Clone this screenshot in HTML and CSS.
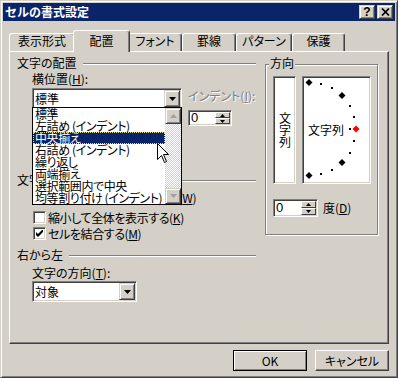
FILE: index.html
```html
<!DOCTYPE html>
<html lang="ja">
<head>
    <meta charset="UTF-8">
    <title>セルの書式設定</title>
    <link rel="stylesheet" href="styles.css">
</head>
<body>
<div class="window">
    <div class="titlebar">
        <span class="title">セルの書式設定</span>
        <div class="caption-btns">
            <span class="cap-btn help">?</span>
            <span class="cap-btn"><svg width="9" height="8" viewBox="0 0 9 8"><path d="M1 0.5l7 7M8 0.5l-7 7" stroke="#000" stroke-width="1.7" fill="none"/></svg></span>
        </div>
    </div>

    <div class="tabs">
        <div class="tab tab-num">表示形式</div>
        <div class="tab tab-align active">配置</div>
        <div class="tab tab-font">フォント</div>
        <div class="tab tab-border">罫線</div>
        <div class="tab tab-pattern">パターン</div>
        <div class="tab tab-protect">保護</div>
    </div>

    <div class="panel">
        <div class="col-left">
            <div class="ghead head-place"><span>文字の配置</span><i class="rule"></i></div>
            <div class="lbl lbl-h">横位置(<u>H</u>):</div>
            <div class="h-row">
                <div class="combo combo-h">
                    <span class="combo-text">標準</span>
                    <span class="dd-btn"><svg width="7" height="4" viewBox="0 0 7 4"><path d="M0 0h7L3.5 4z"/></svg></span>
                </div>
                <div class="indent">
                    <div class="lbl-dis">インデント(<u>I</u>):</div>
                    <div class="spin spin-indent">
                        <span class="spin-val">0</span>
                        <span class="spin-btns">
                            <span class="spin-btn"><svg width="5" height="3" viewBox="0 0 5 3"><path d="M2.5 0L5 3H0z"/></svg></span>
                            <span class="spin-btn"><svg width="5" height="3" viewBox="0 0 5 3"><path d="M0 0h5L2.5 3z"/></svg></span>
                        </span>
                    </div>
                </div>
            </div>

            <div class="ghead head-ctrl"><span>文字の制御</span><i class="rule"></i></div>
            <div class="chk chk-wrap"><span class="box"></span>折り返して全体を表示する(<u>W</u>)</div>
            <div class="chk chk-shrink"><span class="box"></span>縮小して全体を表示する(<u>K</u>)</div>
            <div class="chk chk-merge"><span class="box"><svg width="7" height="7" viewBox="0 0 7 7"><path d="M0 2L2 4L7 -1V2L2 7L0 5z"/></svg></span>セルを結合する(<u>M</u>)</div>

            <div class="ghead head-rtl"><span>右から左</span><i class="rule"></i></div>
            <div class="lbl lbl-dir">文字の方向(<u>T</u>):</div>
            <div class="combo combo-dir">
                <span class="combo-text">対象</span>
                <span class="dd-btn"><svg width="7" height="4" viewBox="0 0 7 4"><path d="M0 0h7L3.5 4z"/></svg></span>
            </div>
        </div>

        <div class="orient">
            <span class="orient-legend">方向</span>
            <div class="orient-row">
                <div class="vbox"><span class="vtext">文字列</span></div>
                <div class="arcbox">
                    <svg width="65" height="104" viewBox="0 0 65 104" shape-rendering="crispEdges">
                        <g fill="#000">
                            <rect x="16" y="5" width="2" height="2"/>
                            <rect x="27" y="9" width="2" height="2"/>
                            <rect x="45" y="27" width="2" height="2"/>
                            <rect x="49" y="38" width="2" height="2"/>
                            <rect x="49" y="62" width="2" height="2"/>
                            <rect x="45" y="74" width="2" height="2"/>
                            <rect x="27" y="91" width="2" height="2"/>
                            <rect x="16" y="95" width="2" height="2"/>
                            <rect x="45" y="50" width="2" height="2"/>
                        </g>
                        <g fill="#000" shape-rendering="auto">
                            <path d="M5 1l3.5 3.5L5 8 1.5 4.5z"/>
                            <path d="M38 14l3.5 3.5L38 21l-3.5-3.5z"/>
                            <path d="M38 81l3.5 3.5L38 88l-3.5-3.5z"/>
                            <path d="M5 94l3.5 3.5L5 101l-3.5-3.5z"/>
                        </g>
                        <path d="M52 47.5l3.5 3.5L52 54.5 48.5 51z" fill="#f00" shape-rendering="auto"/>
                        <text x="4" y="57" class="arc-text">文字列</text>
                    </svg>
                </div>
            </div>
            <div class="deg-row">
                <div class="spin spin-deg">
                    <span class="spin-val">0</span>
                    <span class="spin-btns">
                        <span class="spin-btn"><svg width="5" height="3" viewBox="0 0 5 3"><path d="M2.5 0L5 3H0z"/></svg></span>
                        <span class="spin-btn"><svg width="5" height="3" viewBox="0 0 5 3"><path d="M0 0h5L2.5 3z"/></svg></span>
                    </span>
                </div>
                <span>度(<u>D</u>)</span>
            </div>
        </div>

        <!-- open dropdown of 横位置 -->
        <div class="droplist">
            <div class="items">
                <div class="item">標準</div>
                <div class="item">左詰め (インデント)</div>
                <div class="item sel">中央揃え</div>
                <div class="item">右詰め (インデント)</div>
                <div class="item">繰り返し</div>
                <div class="item">両端揃え</div>
                <div class="item">選択範囲内で中央</div>
                <div class="item">均等割り付け (インデント)</div>
            </div>
            <div class="vscroll">
                <span class="sb-btn"><svg width="7" height="4" viewBox="0 0 7 4"><path d="M3.5 0L7 4H0z"/></svg></span>
                <span class="sb-track"></span>
                <span class="sb-btn"><svg width="7" height="4" viewBox="0 0 7 4"><path d="M0 0h7L3.5 4z"/></svg></span>
            </div>
        </div>

        <svg class="pointer" width="12" height="20" viewBox="0 0 12 20"><path d="M0.5 0.5V16.5L4.5 12.5L7.5 19.5L9.5 18.5L6.5 11.5H11.5Z" fill="#fff" stroke="#000" stroke-width="1"/></svg>
    </div>

    <div class="actions">
        <div class="btn default">OK</div>
        <div class="btn">キャンセル</div>
    </div>
</div>
</body>
</html>
```

FILE: styles.css
```css
* {
    box-sizing: border-box;
}

body {
    margin: 0;
    width: 398px;
    height: 378px;
    overflow: hidden;
    background: #d4d0c8;
    font-family: "Noto Sans CJK JP", sans-serif;
    font-size: 12px;
    line-height: 12px;
    color: #000;
    font-feature-settings: "palt";
}

u {
    text-decoration: underline;
    text-underline-offset: 1px;
}

.window {
    width: 398px;
    height: 378px;
    padding: 2px;
    border: 1px solid;
    border-color: #d4d0c8 #404040 #404040 #d4d0c8;
    box-shadow: inset 1px 1px #fff, inset -1px -1px #808080;
    background: #d4d0c8;
}

/* title bar */
.titlebar {
    height: 18px;
    padding: 0 2px;
    display: flex;
    align-items: center;
    justify-content: space-between;
    background: #0a246a;
    color: #fff;
}

.title {
    font-weight: bold;
    font-size: 12px;
    font-feature-settings: normal;
}

.caption-btns {
    display: flex;
    gap: 2px;
}

.cap-btn {
    width: 16px;
    height: 14px;
    display: flex;
    align-items: center;
    justify-content: center;
    background: #d4d0c8;
    color: #000;
    border: 1px solid;
    border-color: #d4d0c8 #404040 #404040 #d4d0c8;
    box-shadow: inset 1px 1px #fff, inset -1px -1px #808080;
}

.cap-btn.help {
    font-family: "Liberation Sans", sans-serif;
    font-weight: bold;
    font-size: 12px;
}

/* tabs */
.tabs {
    display: flex;
    align-items: flex-end;
    height: 22px;
    margin-top: 9px;
    margin-bottom: -1px;
    padding-left: 6px;
}

.tab {
    height: 19px;
    padding-top: 1px;
    text-align: center;
    background: #d4d0c8;
    border: 1px solid;
    border-bottom: none;
    border-color: #fff #404040 transparent #fff;
    box-shadow: inset -1px 0 #808080;
    border-radius: 3px 3px 0 0;
}

.tab.active {
    position: relative;
    z-index: 2;
    height: 22px;
    padding-top: 4px;
    margin: 0 -2px;
}

.tab-num { width: 66px; }
.tab-align { width: 57px; }
.tab-font { width: 54px; }
.tab-border { width: 54px; }
.tab-pattern { width: 56px; }
.tab-protect { width: 53px; }

/* panel */
.panel {
    position: relative;
    z-index: 1;
    display: flex;
    align-items: flex-start;
    width: 380px;
    height: 293px;
    margin-left: 6px;
    background: #d4d0c8;
    border: 1px solid;
    border-color: #fff #404040 #404040 #fff;
    box-shadow: inset -1px -1px #808080;
}

.col-left {
    width: 246px;
}

.ghead {
    display: flex;
    align-items: center;
    height: 12px;
    padding-left: 7px;
    white-space: nowrap;
}

.ghead .rule {
    flex: 1;
    height: 2px;
    margin: 2px 0 0 6px;
    border-top: 1px solid #808080;
    border-bottom: 1px solid #fff;
}

.head-place { margin-top: 5px; }
.head-ctrl { margin-top: 48px; }
.head-rtl { margin-top: 9px; }

.lbl {
    padding-left: 22px;
    height: 12px;
}

.lbl-h { margin-top: 4px; }
.lbl-dir { margin-top: 6px; }

.h-row {
    display: flex;
    align-items: flex-start;
    margin-top: 3px;
    padding-left: 22px;
}

.combo {
    display: flex;
    height: 21px;
    padding: 1px;
    background: #fff;
    border: 1px solid;
    border-color: #808080 #fff #fff #808080;
    box-shadow: inset 1px 1px #404040, inset -1px -1px #d4d0c8;
}

.combo-h { width: 150px; }
.combo-dir { width: 105px; margin: 2px 0 0 22px; }

.combo-text {
    flex: 1;
    padding: 3px 0 0 1px;
}

.dd-btn {
    width: 16px;
    height: 17px;
    display: flex;
    align-items: center;
    justify-content: center;
    background: #d4d0c8;
    border: 1px solid;
    border-color: #d4d0c8 #404040 #404040 #d4d0c8;
    box-shadow: inset 1px 1px #fff, inset -1px -1px #808080;
}

.indent {
    margin-left: 6px;
    padding-top: 2px;
}

.lbl-dis {
    height: 12px;
    color: #808080;
    text-shadow: 1px 1px #fff;
    white-space: nowrap;
}

.spin {
    display: flex;
    padding: 1px;
    background: #fff;
    border: 1px solid;
    border-color: #808080 #fff #fff #808080;
    box-shadow: inset 1px 1px #404040, inset -1px -1px #d4d0c8;
}

.spin-indent {
    width: 44px;
    height: 16px;
    margin-top: 8px;
}

.spin-deg {
    width: 45px;
    height: 18px;
}

.spin-val {
    flex: 1;
    padding-left: 1px;
    font-family: "Liberation Sans", sans-serif;
    font-size: 13px;
    line-height: 12px;
}

.spin-deg .spin-val {
    padding-top: 1px;
}

.spin-btns {
    width: 15px;
    display: flex;
    flex-direction: column;
}

.spin-btn {
    flex: 1;
    display: flex;
    align-items: center;
    justify-content: center;
    background: #d4d0c8;
    border: 1px solid;
    border-color: #fff #404040 #404040 #fff;
}

/* checkboxes */
.chk {
    display: flex;
    align-items: center;
    height: 13px;
    padding-left: 23px;
    white-space: nowrap;
    letter-spacing: -0.4px;
}

.chk-wrap { margin-top: 5px; }
.chk-shrink { margin-top: 7px; }
.chk-merge { margin-top: 3px; }

.box {
    width: 13px;
    height: 13px;
    margin-right: 2px;
    display: flex;
    align-items: center;
    justify-content: center;
    background: #fff;
    border: 1px solid;
    border-color: #808080 #fff #fff #808080;
    box-shadow: inset 1px 1px #404040, inset -1px -1px #d4d0c8;
}

/* 方向 */
.orient {
    position: relative;
    width: 113px;
    height: 171px;
    margin: 12px 0 0 9px;
    padding: 11px 0 0 7px;
    border: 1px solid #808080;
    box-shadow: inset 1px 1px #fff, 1px 1px #fff;
}

.orient-legend {
    position: absolute;
    top: -8px;
    left: 3px;
    padding: 0 1px;
    background: #d4d0c8;
}

.orient-row {
    display: flex;
    gap: 6px;
}

.vbox,
.arcbox {
    height: 108px;
    padding: 1px;
    background: #fff;
    border: 1px solid;
    border-color: #808080 #fff #fff #808080;
    box-shadow: inset 1px 1px #404040, inset -1px -1px #d4d0c8;
}

.vbox {
    width: 23px;
    display: flex;
    align-items: center;
    justify-content: center;
}

.vtext {
    writing-mode: vertical-rl;
    font-feature-settings: normal;
}

.arcbox {
    width: 69px;
}

.arcbox svg {
    display: block;
}

.arc-text {
    font-family: "Noto Sans CJK JP", sans-serif;
    font-size: 12px;
}

.deg-row {
    display: flex;
    align-items: center;
    gap: 5px;
    margin-top: 15px;
}

/* dropdown */
.droplist {
    position: absolute;
    z-index: 3;
    left: 22px;
    top: 55px;
    width: 150px;
    height: 98px;
    display: flex;
    background: #fff;
    border: 1px solid #000;
}

.items {
    width: 132px;
}

.item {
    height: 12px;
    padding-left: 2px;
    white-space: nowrap;
    letter-spacing: -0.4px;
}

.item.sel {
    background: #0a246a;
    color: #fff;
    outline: 1px dotted #e8d890;
    outline-offset: -1px;
}

.vscroll {
    width: 16px;
    display: flex;
    flex-direction: column;
}

.sb-btn {
    height: 16px;
    display: flex;
    align-items: center;
    justify-content: center;
    background: #d4d0c8;
    fill: #a0a0a0;
    border: 1px solid;
    border-color: #d4d0c8 #404040 #404040 #d4d0c8;
    box-shadow: inset 1px 1px #fff, inset -1px -1px #808080;
}

.sb-track {
    flex: 1;
    background: repeating-conic-gradient(#fff 0 25%, #d4d0c8 0 50%) 0 0 / 2px 2px;
}

.pointer {
    position: absolute;
    z-index: 4;
    left: 147px;
    top: 91px;
}

/* bottom buttons */
.actions {
    display: flex;
    justify-content: flex-end;
    gap: 8px;
    margin-top: 6px;
    padding-right: 6px;
}

.btn {
    width: 74px;
    height: 21px;
    display: flex;
    align-items: center;
    justify-content: center;
    background: #d4d0c8;
    border: 1px solid;
    border-color: #fff #404040 #404040 #fff;
    box-shadow: inset -1px -1px #808080;
}

.btn.default {
    border-color: #000;
    box-shadow: inset 1px 1px #fff, inset -1px -1px #808080;
}
```
